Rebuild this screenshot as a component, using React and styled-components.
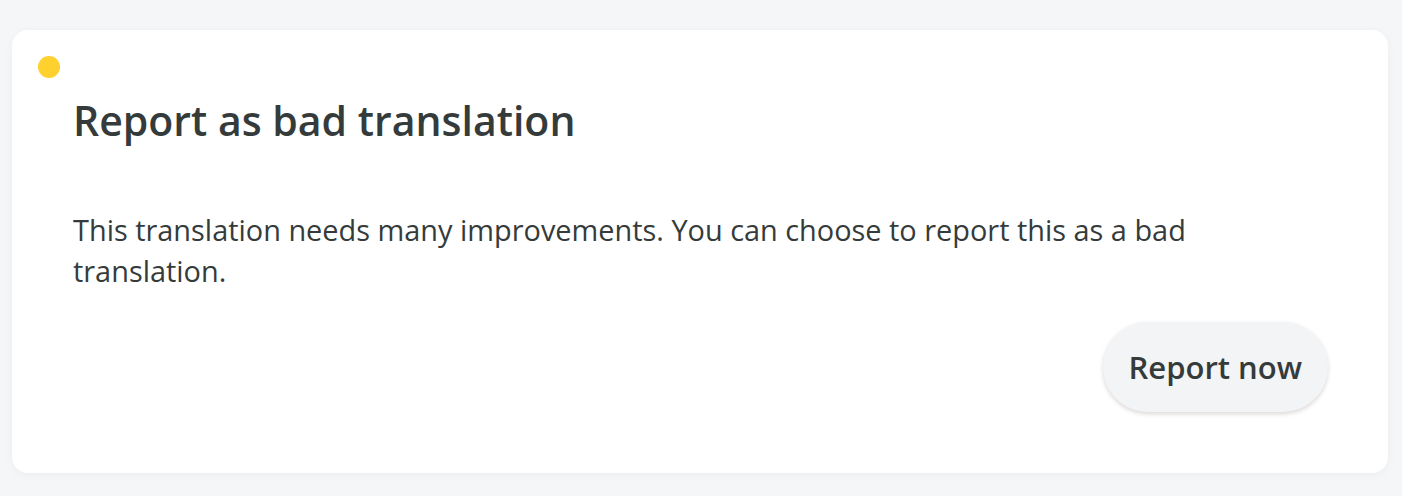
import React from 'react';
import styled, { createGlobalStyle } from 'styled-components';

const GlobalStyle = createGlobalStyle`
  html, body {
    margin: 0;
    padding: 0;
    background: #f5f6f7;
  }
  body {
    font-family: "Open Sans", "Noto Sans", sans-serif;
    color: #353b3b;
  }
`;

const Page = styled.div`
  padding: 30px 14px 22px 12px;
`;

const Card = styled.section`
  position: relative;
  background: #ffffff;
  border-radius: 16px;
  box-shadow: 0 2px 10px rgba(0, 0, 0, 0.04);
  padding: 60px 60px 60px 61px;
  min-height: 443px;
  box-sizing: border-box;
`;

const Dot = styled.span`
  position: absolute;
  top: 26px;
  left: 26px;
  width: 22px;
  height: 22px;
  border-radius: 50%;
  background: #ffd12f;
`;

const Title = styled.h2`
  margin: 0;
  font-size: 41px;
  font-weight: 600;
  line-height: 60px;
`;

const Body = styled.p`
  margin: 59px 0 0;
  font-size: 28.9px;
  line-height: 41px;
  max-width: 1160px;
`;

const Actions = styled.div`
  display: flex;
  justify-content: flex-end;
  margin-top: 31px;
`;

const Button = styled.button`
  height: 90px;
  padding: 0 26px;
  border: none;
  border-radius: 45px;
  background: #f3f4f5;
  box-shadow: 0 2px 4px rgba(60, 40, 20, 0.18);
  font-family: inherit;
  font-size: 31px;
  font-weight: 600;
  color: #353b3b;
  cursor: pointer;
`;

export default function App() {
  return (
    <Page>
      <GlobalStyle />
      <Card>
        <Dot />
        <Title>Report as bad translation</Title>
        <Body>
          This translation needs many improvements. You can choose to report this as a bad translation.
        </Body>
        <Actions>
          <Button>Report now</Button>
        </Actions>
      </Card>
    </Page>
  );
}
